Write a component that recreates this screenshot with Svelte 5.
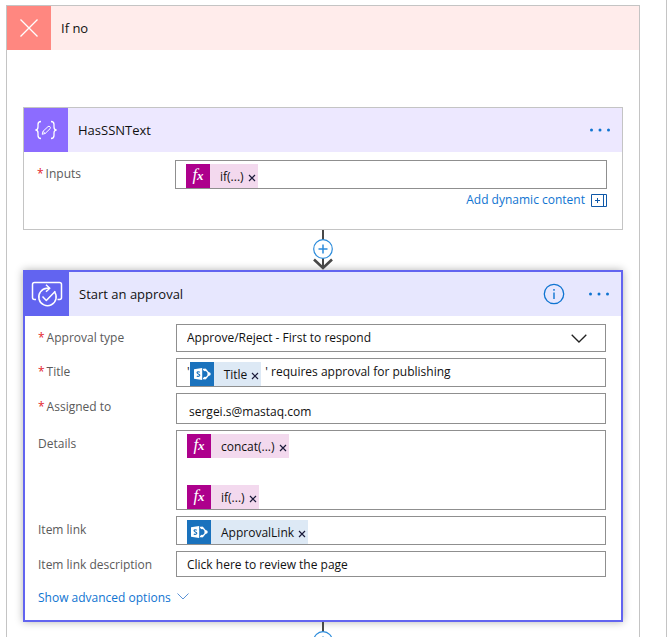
<script>
  const approvalTypes = [
    'Approve/Reject - First to respond',
    'Approve/Reject - Everyone must approve',
    'Custom Responses - Wait for one response',
    'Custom Responses - Wait for all responses'
  ];
  let approvalType = $state(approvalTypes[0]);
  let assignedTo = $state('sergei.s@mastaq.com');
  let linkDescription = $state('Click here to review the page');
</script>

{#snippet token(kind, text)}
  <span class="token {kind}" contenteditable="false">
    <span class="token-icon">
      {#if kind === 'fx'}
        <i>f<small>x</small></i>
      {:else}
        <svg width="24" height="24" viewBox="0 0 24 24" aria-hidden="true">
          <path d="M13 7.500h2.500l4 4.500-4 4.500H13" fill="none" stroke="#fff" stroke-width="1.300" />
          <circle cx="15" cy="8" r="1.300" fill="#fff" />
          <circle cx="19" cy="12" r="1.700" fill="#fff" />
          <circle cx="15" cy="16" r="1.300" fill="#fff" />
          <path d="M4 7.200 12.200 6v12L4 16.800z" fill="#fff" />
          <path d="M9.800 10.200C8.500 9.500 7 9.800 7 10.800c.1 1.200 2.800 1.100 2.800 2.500 0 1.200-1.700 1.300-3 .6" fill="none" stroke="#1a72bd" stroke-width="1.100" />
        </svg>
      {/if}
    </span>
    <span class="token-text">{text}</span>
    <button class="remove" type="button" aria-label="Remove {text}">
      <svg width="8" height="8" viewBox="0 0 8 8"><path d="M1 1l6 6M7 1 1 7" stroke="#1b1b3a" stroke-width="1.200" /></svg>
    </button>
  </span>
{/snippet}

{#snippet connector()}
  <div class="connector">
    <svg width="22" height="40" viewBox="0 0 22 40" aria-hidden="true">
      <path d="M11 0v38" stroke="#484848" stroke-width="2" />
      <path d="M2 29.500l9 8.500 9-8.500" fill="none" stroke="#484848" stroke-width="2.600" />
      <circle cx="11" cy="19" r="9.300" fill="#fff" stroke="#2b8bdb" stroke-width="1.200" />
      <path d="M6.500 19h9M11 14.500v9" stroke="#2b8bdb" stroke-width="1.500" />
    </svg>
  </div>
{/snippet}

{#snippet menu()}
  <button class="menu" type="button" aria-label="Menu">
    <svg width="22" height="4" viewBox="0 0 22 4"><g fill="#0f74d1"><circle cx="2.500" cy="2" r="1.500" /><circle cx="11" cy="2" r="1.500" /><circle cx="19.500" cy="2" r="1.500" /></g></svg>
  </button>
{/snippet}

<div class="page">
  <div class="condition">
    <section class="branch">
      <header class="no">
        <span class="badge">
          <svg width="44" height="44" viewBox="0 0 44 44" aria-hidden="true"><path d="M13.500 13.500l17 17M30.500 13.500l-17 17" stroke="#fff" stroke-width="1.300" /></svg>
        </span>
        <h2>If no</h2>
      </header>

      <div class="steps">
        <article class="card">
          <header class="compose">
            <span class="badge">
              <svg width="44" height="44" viewBox="0 0 44 44" fill="none" stroke="#fff" stroke-width="1.300" aria-hidden="true">
                <path d="M17 13.500c-2.500 0-3 .8-3 3v2.500c0 2-1 3-2.600 3 1.600 0 2.600 1 2.600 3v2.500c0 2.200.5 3 3 3" />
                <path d="M27 13.500c2.500 0 3 .8 3 3v2.500c0 2 1 3 2.600 3-1.600 0-2.600 1-2.600 3v2.500c0 2.200-.5 3-3 3" />
                <path d="M18.200 26.300l.8-3 5-4.700c1.300-1.200 3.300.8 2.100 2.100l-5 4.800zM19 23.300l2.100 2.200" stroke-width="1" />
              </svg>
            </span>
            <h2>HasSSNText</h2>
            {@render menu()}
          </header>
          <div class="fields">
            <span class="label" id="inputs-label"><b>*</b>Inputs</span>
            <div class="box" role="textbox" tabindex="0" contenteditable="true" aria-labelledby="inputs-label">
              {@render token('fx', 'if(...)')}
            </div>
          </div>
          <div class="dynamic">
            <a href="#dynamic">Add dynamic content
              <svg width="16" height="13" viewBox="0 0 16 13" fill="none" stroke="#0f58a8" aria-hidden="true"><path d="M.5.5h15v12H.5zM12.500.5v12M4 6.500h5M6.500 4v5" /></svg>
            </a>
          </div>
        </article>

        {@render connector()}

        <article class="card selected">
          <header class="approval">
            <span class="badge">
              <svg width="44" height="44" viewBox="0 0 44 44" fill="none" stroke="#fff" stroke-width="1.500" stroke-linejoin="round" aria-hidden="true">
                <path d="M11 27.500H9.500a2 2 0 0 1-2-2V12.500a2 2 0 0 1 2-2h25a2 2 0 0 1 2 2v13a2 2 0 0 1-2 2h-2" />
                <path d="M24 16.300h-2a8.700 8.700 0 1 0 7.300 3.300M21 12.800l3.800 3.500-3.800 3.500" />
                <path d="M17.500 24.500l3.800 3.900 9-9.200" />
              </svg>
            </span>
            <h2>Start an approval</h2>
            <button class="info" type="button" aria-label="Information">
              <svg width="22" height="22" viewBox="0 0 22 22"><circle cx="11" cy="11" r="9.700" fill="none" stroke="#0f74d1" stroke-width="1.300" /><path d="M11 9.500v6.500M11 6v1.700" stroke="#0f74d1" stroke-width="1.400" /></svg>
            </button>
            {@render menu()}
          </header>
          <div class="fields">
            <label class="label" for="type"><b>*</b>Approval type</label>
            <div class="select">
              <select id="type" bind:value={approvalType}>
                {#each approvalTypes as option}<option>{option}</option>{/each}
              </select>
              <svg class="chevron" width="16" height="9" viewBox="0 0 16 9" aria-hidden="true"><path d="M.7.7 8 8 15.300.7" fill="none" stroke="#222" stroke-width="1.300" /></svg>
            </div>

            <span class="label" id="title-label"><b>*</b>Title</span>
            <div class="box" role="textbox" tabindex="0" contenteditable="true" aria-labelledby="title-label">
              <span>'</span>{@render token('sp', 'Title')}<span class="after">' requires approval for publishing</span>
            </div>

            <label class="label" for="assigned"><b>*</b>Assigned to</label>
            <input id="assigned" class="people" type="text" bind:value={assignedTo} />

            <span class="label" id="details-label">Details</span>
            <div class="box lines" role="textbox" tabindex="0" contenteditable="true" aria-labelledby="details-label">
              {@render token('fx', 'concat(...)')}
              {@render token('fx', 'if(...)')}
            </div>

            <span class="label" id="link-label">Item link</span>
            <div class="box" role="textbox" tabindex="0" contenteditable="true" aria-labelledby="link-label">
              {@render token('sp', 'ApprovalLink')}
            </div>

            <label class="label" for="description">Item link description</label>
            <input id="description" type="text" bind:value={linkDescription} />
          </div>
          <div class="advanced">
            <button type="button">Show advanced options
              <svg width="12" height="12" viewBox="0 0 12 12" aria-hidden="true"><path d="M.5 1.500 6 7l5.500-5.500" fill="none" stroke="#5b93d6" /></svg>
            </button>
          </div>
        </article>

        {@render connector()}
      </div>
    </section>
  </div>
</div>

<style>
  :global(body) {
    background: #fff;
  }
  .page,
  .page * {
    box-sizing: border-box;
  }
  .page {
    height: 100vh;
    overflow: hidden;
    padding-right: 3px;
    font: 12px/20px 'Open Sans', 'Noto Sans', sans-serif;
    color: #111;
  }
  .condition {
    min-height: 100%;
    padding: 5px 26px 0 6px;
    border-right: 1px solid #c4c4c4;
  }
  .branch {
    border: 1px solid #c4c4c4;
  }
  header {
    display: flex;
    align-items: center;
    height: 44px;
  }
  h2 {
    flex: 1;
    margin: 0;
    padding-left: 10px;
    font-size: 13px;
    font-weight: 400;
  }
  .badge,
  .badge svg {
    display: block;
    width: 44px;
    height: 44px;
  }
  .no {
    background: #ffeceb;
  }
  .no .badge {
    background: #ff8780;
  }
  .compose {
    background: #ede8ff;
  }
  .compose .badge {
    background: #8c6cff;
  }
  .approval {
    background: #e7e7fe;
  }
  .approval .badge {
    background: #6264f0;
  }
  .steps {
    padding: 57px 16px 0;
  }
  .card {
    border: 1px solid #c4c4c4;
    background: #fff;
  }
  .selected {
    border: 2px solid #6264f0;
    box-shadow: 0 0 8px rgba(0, 0, 0, 0.3);
  }
  button {
    padding: 0;
    border: 0;
    background: none;
    color: inherit;
    font: inherit;
    cursor: pointer;
  }
  .menu,
  .info {
    display: flex;
    align-items: center;
    height: 22px;
  }
  .menu {
    margin-right: 11px;
  }
  .info {
    margin-right: 23px;
  }
  .fields {
    display: grid;
    grid-template-columns: 138px 1fr;
    align-items: start;
    row-gap: 6px;
    padding: 8px 15px 0 13px;
  }
  .label {
    line-height: 28px;
    color: #5a5a5a;
  }
  .label b {
    margin-right: 2px;
    font-weight: 400;
    color: #e3242b;
  }
  .box,
  select,
  input {
    width: 100%;
    border: 1px solid #8f8f8f;
    border-radius: 0;
    background: #fff;
    color: #111;
    font: inherit;
    outline: none;
  }
  .box {
    display: flex;
    align-items: flex-start;
    min-height: 29px;
    padding: 3px 10px 0;
    white-space: nowrap;
  }
  .lines {
    flex-direction: column;
    gap: 27px;
  }
  .select {
    display: grid;
    align-items: center;
  }
  .select > * {
    grid-area: 1 / 1;
  }
  select {
    height: 28px;
    padding: 0 10px;
    appearance: none;
  }
  .chevron {
    justify-self: end;
    margin-right: 19px;
    pointer-events: none;
  }
  input {
    height: 26px;
    padding: 0 10px;
  }
  .people {
    height: 31px;
    padding: 5px 12px 0;
  }
  .token {
    display: flex;
    align-items: center;
    height: 24px;
    padding-right: 2px;
  }
  .fx {
    background: #f3d9ee;
  }
  .sp {
    background: #dde9f5;
  }
  .token-icon {
    width: 24px;
    height: 24px;
    color: #fff;
    text-align: center;
  }
  .token-icon svg {
    display: block;
  }
  .fx .token-icon {
    background: #ad008c;
  }
  .sp .token-icon {
    background: #1a72bd;
  }
  .token-icon i {
    font: italic 400 17px/22px 'Liberation Serif', serif;
  }
  .token-icon small {
    font-size: 13px;
    font-weight: 700;
  }
  .token-text {
    padding: 2px 4px 0 10px;
  }
  .remove {
    display: flex;
    padding-top: 4px;
  }
  .after {
    padding-left: 4px;
  }
  .dynamic {
    height: 40px;
    padding: 1px 15px 0;
    text-align: right;
  }
  .dynamic a,
  .advanced button {
    display: inline-flex;
    align-items: center;
    gap: 6px;
    color: #0f74d1;
    text-decoration: none;
  }
  .advanced {
    height: 43px;
    padding: 9px 13px 0;
  }
  .advanced {
    height: 41px;
  }
  .connector {
    height: 40px;
  }
  .connector svg {
    display: block;
    margin: 0 auto;
  }
</style>
